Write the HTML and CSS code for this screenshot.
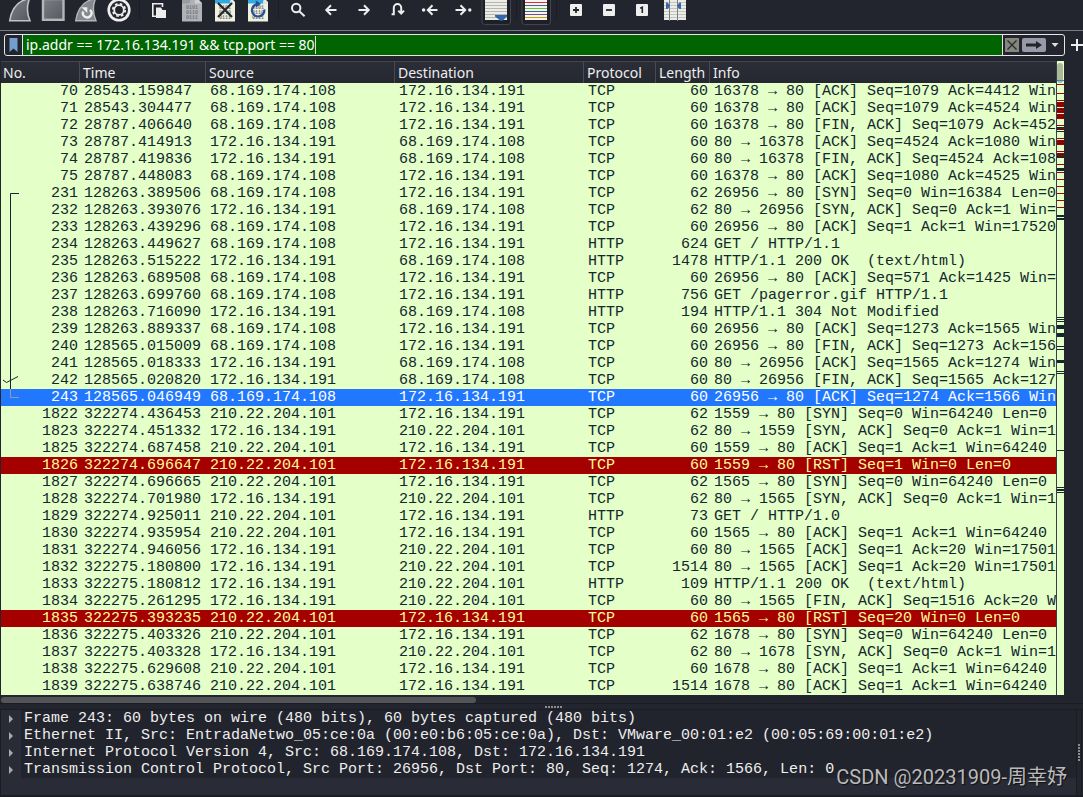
FILE: index.html
```html
<!DOCTYPE html>
<html lang="en">
<head>
<meta charset="utf-8">
<title>Packet capture</title>
<link rel="stylesheet" href="styles.css">
</head>
<body>
<div class="toolbar" role="toolbar" aria-label="Main toolbar">
  <button class="tool" aria-label="Start capture"><svg viewBox="-16 0 33 30"><defs><linearGradient id="metal" x1="0" y1="0" x2="1" y2="1"><stop offset="0" stop-color="#7c7f86"/><stop offset="1" stop-color="#555861"/></linearGradient></defs><path d="M-10.3 20.8C-8.5 9 -2 0.5 9.5 -1.5C7 5 6.5 13 10 20.8Z" fill="url(#metal)" stroke="#c2c3c5" stroke-width="1.6"/></svg></button>
  <button class="tool" aria-label="Stop capture"><svg viewBox="-16 0 33 30"><rect x="-10" y="-1" width="20.5" height="20.8" fill="url(#metal)" stroke="#b5b6b9" stroke-width="2.4"/></svg></button>
  <button class="tool" aria-label="Restart capture"><svg viewBox="-16 0 33 30"><path d="M-10.3 20.8C-8.5 9 -2 0.5 9.5 -1.5C7 5 6.5 13 10 20.8Z" fill="#85888e" stroke="#b5b6b8" stroke-width="1.4"/><path d="M-2.8 11.5A4.3 4.3 0 1 0 4 9.8" fill="none" stroke="#eee" stroke-width="2.4"/><path d="M-4.5 7.2h5.800v5.800z" fill="#eee"/></svg></button>
  <button class="tool" aria-label="Capture options"><svg viewBox="-16 0 33 30"><circle cx="0" cy="10" r="11.6" fill="#eee"/><circle cx="0" cy="10" r="9" fill="#24262c"/><circle cx="0" cy="10" r="6.2" fill="none" stroke="#eee" stroke-width="1.8" stroke-dasharray="2.600 2.270"/><circle cx="0" cy="10" r="4.800" fill="#24262c" stroke="#eee" stroke-width="1.800"/></svg></button>
  <span class="divider"></span>
  <button class="tool" aria-label="Open file"><svg viewBox="-16 0 33 30"><path d="M-2.5 16.3h-3.7V3.8H3.5V7" fill="none" stroke="#eee" stroke-width="1.6"/><path d="M-3 7.5h5l1.5 2.5h3.5v8h-10z" fill="#eee"/></svg></button>
  <button class="tool" aria-label="Save file"><svg viewBox="-16 0 33 30"><path d="M-10-2H5l5 5v18.5h-20z" fill="#b0b2b8"/><path d="M-10 0H-1L-3 3.500h-7z" fill="#999ba2"/><path d="M3-1v4.500h7L5-2z" fill="#cfd0d3"/><g class="bits"><text x="-6" y="9">0101</text><text x="-6" y="14">0110</text><text x="-6" y="19">0111</text></g></svg></button>
  <button class="tool" aria-label="Close file"><svg viewBox="-16 0 33 30"><path d="M-10-2H6l4 4v19.5h-20z" fill="#f1f1df"/><path d="M-10 0H6v3.500h-16z" fill="#31a9e2"/><path d="M5 0v3.500h5z" fill="#c8e5ef"/><g class="bits"><text x="-6" y="9">0101</text><text x="-6" y="14">0110</text><text x="-6" y="19">0111</text></g><path d="M-7 3L7 17M7 3L-7 17" stroke="#25272c" stroke-width="2.2"/></svg></button>
  <button class="tool" aria-label="Reload file"><svg viewBox="-16 0 33 30"><path d="M-10-2H6l4 4v19.5h-20z" fill="#f1f1df"/><path d="M-10 0H6v3.500h-16z" fill="#31a9e2"/><path d="M5 0v3.500h5z" fill="#c8e5ef"/><g class="bits"><text x="-6" y="9">0101</text><text x="-6" y="14">0110</text><text x="-6" y="19">0111</text></g><path d="M-1 4.2A6.2 6.2 0 1 0 6.300 9.500" fill="none" stroke="#264f96" stroke-width="2.2"/><path d="M-2.2 0.6v7.2L3 3.8z" fill="#264f96"/></svg></button>
  <span class="divider"></span>
  <button class="tool" aria-label="Find packet"><svg viewBox="-16 0 33 30"><circle cx="-1.8" cy="8" r="4.2" class="line"/><path d="M1.3 11.2L6.6 16.3" class="line"/></svg></button>
  <button class="tool" aria-label="Previous packet"><svg viewBox="-16 0 33 30"><path d="M5.5 10H-4.5M0 5.3L-4.7 10L0 14.7" class="line"/></svg></button>
  <button class="tool" aria-label="Next packet"><svg viewBox="-16 0 33 30"><path d="M-5.5 10H4.5M0 5.3L4.7 10L0 14.7" class="line"/></svg></button>
  <button class="tool" aria-label="Go to packet"><svg viewBox="-16 0 33 30"><path d="M-5.4 14.2h2.2V7.8a3.7 3.7 0 0 1 7.4 0V13M1.3 10.6L4.2 13.6L7 10.6" class="line"/></svg></button>
  <button class="tool" aria-label="First packet"><svg viewBox="-16 0 33 30"><circle cx="-6.4" cy="10" r="1.7" fill="#eee"/><path d="M7.5 10H-1.5M2.5 5.3L-2.2 10L2.5 14.7" class="line"/></svg></button>
  <button class="tool" aria-label="Last packet"><svg viewBox="-16 0 33 30"><circle cx="6.8" cy="10" r="1.7" fill="#eee"/><path d="M-7.5 10H1.5M-2.5 5.3L2.2 10L-2.5 14.7" class="line"/></svg></button>
  <button class="tool" aria-label="Auto scroll" aria-pressed="true"><svg viewBox="-16 0 33 30"><rect x="-14" y="-6" width="28.5" height="30.5" rx="2.5" class="pressed"/><path d="M-11 0h22v20h-22z" fill="#edede8"/><path d="M-11 2.5h22M-11 5.5h22M-11 8.5h22M-11 11.5h22M-11 14.5h22M-11 17.5h22" stroke="#b5b6b2"/><path d="M-1 15H11V16.5L6.5 20.8H4.5L-1 16.5z" fill="#3267ad"/></svg></button>
  <span class="divider"></span>
  <button class="tool" aria-label="Colorize" aria-pressed="true"><svg viewBox="-16 0 33 30"><rect x="-14" y="-6" width="28.5" height="30.5" rx="2.5" class="pressed"/><path d="M-11 0h22v20h-22z" fill="#f4f4f0"/><path d="M-11 2.5h22" stroke="#ef2929"/><path d="M-11 5.5h22M-11 11.5h22" stroke="#3465a4"/><path d="M-11 8.5h22" stroke="#73c216"/><path d="M-11 14.5h22" stroke="#75507b"/><path d="M-11 17.5h22" stroke="#c4a000"/></svg></button>
  <span class="divider"></span>
  <button class="tool" aria-label="Zoom in"><svg viewBox="-16 0 33 30"><rect x="-6" y="4" width="12" height="12" rx="1" fill="#eee"/><path d="M-3 10h6M0 7v6" stroke="#24262c" stroke-width="1.8"/></svg></button>
  <button class="tool" aria-label="Zoom out"><svg viewBox="-16 0 33 30"><rect x="-6" y="4" width="12" height="12" rx="1" fill="#eee"/><path d="M-3 10h6" stroke="#24262c" stroke-width="1.8"/></svg></button>
  <button class="tool" aria-label="Normal size"><svg viewBox="-16 0 33 30"><rect x="-6" y="4" width="12" height="12" rx="1" fill="#eee"/><path d="M-1.8 8.2L0.3 7.3V13" stroke="#24262c" stroke-width="1.6" fill="none"/></svg></button>
  <button class="tool" aria-label="Resize columns"><svg viewBox="-16 0 33 30"><path d="M-11 0h22v20h-22z" fill="#edede8"/><path d="M-11 2.5h22M-11 5.5h22M-11 8.5h22M-11 11.5h22M-11 14.5h22M-11 17.5h22" stroke="#c3c4c0"/><path d="M-5.5 0v21M2.5 0v21" stroke="#7d7f7c"/><path d="M-9 2.5h1.5L-5.5 5v2L-7.5 9H-9zM6 2.5H4.5L2.5 5v2L4.5 9H6z" fill="#3267ad"/></svg></button>
</div>

<div class="filterbar">
  <div class="filter">
    <button class="bookmark" aria-label="Filter bookmarks"><svg viewBox="0 0 9 14"><path d="M0.5 0h8v14l-4-3.5l-4 3.5z" fill="#729fcf"/></svg></button>
    <label class="expression"><input class="query" type="text" aria-label="Display filter" value="ip.addr == 172.16.134.191 &amp;&amp; tcp.port == 80" spellcheck="false"><span class="cursor"></span></label>
    <button class="clear" aria-label="Clear filter"><svg viewBox="0 0 14 14"><path d="M2.5 2.5l9 9M11.5 2.5l-9 9" stroke="#2a2c30" stroke-width="1.4"/></svg></button>
    <button class="apply" aria-label="Apply filter"><svg viewBox="0 0 24 14"><path d="M4 5.5h10V3l6 4l-6 4V8.5H4z" fill="#22242a"/></svg></button>
    <button class="history" aria-label="Recent filters"><svg viewBox="0 0 8 4"><path d="M0.5 0h7L4 4z" fill="#ddd"/></svg></button>
  </div>
  <button class="add" aria-label="Add filter button"><svg viewBox="0 0 12 12"><path d="M6 0v12M0 6h12" stroke="#eee" stroke-width="2"/></svg></button>
</div>

<main class="packets">
  <div class="list">
    <table class="grid">
      <colgroup><col class="c-no"><col class="c-time"><col class="c-addr"><col class="c-addr"><col class="c-proto"><col class="c-len"><col></colgroup>
      <thead><tr><th>No.</th><th>Time</th><th>Source</th><th>Destination</th><th>Protocol</th><th>Length</th><th>Info</th></tr></thead>
      <tbody>
        <tr><td>70</td><td>28543.159847</td><td>68.169.174.108</td><td>172.16.134.191</td><td>TCP</td><td>60</td><td>16378 → 80 [ACK] Seq=1079 Ack=4412 Win</td></tr>
        <tr><td>71</td><td>28543.304477</td><td>68.169.174.108</td><td>172.16.134.191</td><td>TCP</td><td>60</td><td>16378 → 80 [ACK] Seq=1079 Ack=4524 Win</td></tr>
        <tr><td>72</td><td>28787.406640</td><td>68.169.174.108</td><td>172.16.134.191</td><td>TCP</td><td>60</td><td>16378 → 80 [FIN, ACK] Seq=1079 Ack=452</td></tr>
        <tr><td>73</td><td>28787.414913</td><td>172.16.134.191</td><td>68.169.174.108</td><td>TCP</td><td>60</td><td>80 → 16378 [ACK] Seq=4524 Ack=1080 Win</td></tr>
        <tr><td>74</td><td>28787.419836</td><td>172.16.134.191</td><td>68.169.174.108</td><td>TCP</td><td>60</td><td>80 → 16378 [FIN, ACK] Seq=4524 Ack=108</td></tr>
        <tr><td>75</td><td>28787.448083</td><td>68.169.174.108</td><td>172.16.134.191</td><td>TCP</td><td>60</td><td>16378 → 80 [ACK] Seq=1080 Ack=4525 Win</td></tr>
        <tr><td>231</td><td>128263.389506</td><td>68.169.174.108</td><td>172.16.134.191</td><td>TCP</td><td>62</td><td>26956 → 80 [SYN] Seq=0 Win=16384 Len=0</td></tr>
        <tr><td>232</td><td>128263.393076</td><td>172.16.134.191</td><td>68.169.174.108</td><td>TCP</td><td>62</td><td>80 → 26956 [SYN, ACK] Seq=0 Ack=1 Win=</td></tr>
        <tr><td>233</td><td>128263.439296</td><td>68.169.174.108</td><td>172.16.134.191</td><td>TCP</td><td>60</td><td>26956 → 80 [ACK] Seq=1 Ack=1 Win=17520</td></tr>
        <tr><td>234</td><td>128263.449627</td><td>68.169.174.108</td><td>172.16.134.191</td><td>HTTP</td><td>624</td><td>GET / HTTP/1.1</td></tr>
        <tr><td>235</td><td>128263.515222</td><td>172.16.134.191</td><td>68.169.174.108</td><td>HTTP</td><td>1478</td><td>HTTP/1.1 200 OK  (text/html)</td></tr>
        <tr><td>236</td><td>128263.689508</td><td>68.169.174.108</td><td>172.16.134.191</td><td>TCP</td><td>60</td><td>26956 → 80 [ACK] Seq=571 Ack=1425 Win=</td></tr>
        <tr><td>237</td><td>128263.699760</td><td>68.169.174.108</td><td>172.16.134.191</td><td>HTTP</td><td>756</td><td>GET /pagerror.gif HTTP/1.1</td></tr>
        <tr><td>238</td><td>128263.716090</td><td>172.16.134.191</td><td>68.169.174.108</td><td>HTTP</td><td>194</td><td>HTTP/1.1 304 Not Modified</td></tr>
        <tr><td>239</td><td>128263.889337</td><td>68.169.174.108</td><td>172.16.134.191</td><td>TCP</td><td>60</td><td>26956 → 80 [ACK] Seq=1273 Ack=1565 Win</td></tr>
        <tr><td>240</td><td>128565.015009</td><td>68.169.174.108</td><td>172.16.134.191</td><td>TCP</td><td>60</td><td>26956 → 80 [FIN, ACK] Seq=1273 Ack=156</td></tr>
        <tr><td>241</td><td>128565.018333</td><td>172.16.134.191</td><td>68.169.174.108</td><td>TCP</td><td>60</td><td>80 → 26956 [ACK] Seq=1565 Ack=1274 Win</td></tr>
        <tr><td>242</td><td>128565.020820</td><td>172.16.134.191</td><td>68.169.174.108</td><td>TCP</td><td>60</td><td>80 → 26956 [FIN, ACK] Seq=1565 Ack=127</td></tr>
        <tr class="selected"><td>243</td><td>128565.046949</td><td>68.169.174.108</td><td>172.16.134.191</td><td>TCP</td><td>60</td><td>26956 → 80 [ACK] Seq=1274 Ack=1566 Win</td></tr>
        <tr><td>1822</td><td>322274.436453</td><td>210.22.204.101</td><td>172.16.134.191</td><td>TCP</td><td>62</td><td>1559 → 80 [SYN] Seq=0 Win=64240 Len=0</td></tr>
        <tr><td>1823</td><td>322274.451332</td><td>172.16.134.191</td><td>210.22.204.101</td><td>TCP</td><td>62</td><td>80 → 1559 [SYN, ACK] Seq=0 Ack=1 Win=1</td></tr>
        <tr><td>1825</td><td>322274.687458</td><td>210.22.204.101</td><td>172.16.134.191</td><td>TCP</td><td>60</td><td>1559 → 80 [ACK] Seq=1 Ack=1 Win=64240</td></tr>
        <tr class="reset"><td>1826</td><td>322274.696647</td><td>210.22.204.101</td><td>172.16.134.191</td><td>TCP</td><td>60</td><td>1559 → 80 [RST] Seq=1 Win=0 Len=0</td></tr>
        <tr><td>1827</td><td>322274.696665</td><td>210.22.204.101</td><td>172.16.134.191</td><td>TCP</td><td>62</td><td>1565 → 80 [SYN] Seq=0 Win=64240 Len=0</td></tr>
        <tr><td>1828</td><td>322274.701980</td><td>172.16.134.191</td><td>210.22.204.101</td><td>TCP</td><td>62</td><td>80 → 1565 [SYN, ACK] Seq=0 Ack=1 Win=1</td></tr>
        <tr><td>1829</td><td>322274.925011</td><td>210.22.204.101</td><td>172.16.134.191</td><td>HTTP</td><td>73</td><td>GET / HTTP/1.0</td></tr>
        <tr><td>1830</td><td>322274.935954</td><td>210.22.204.101</td><td>172.16.134.191</td><td>TCP</td><td>60</td><td>1565 → 80 [ACK] Seq=1 Ack=1 Win=64240</td></tr>
        <tr><td>1831</td><td>322274.946056</td><td>172.16.134.191</td><td>210.22.204.101</td><td>TCP</td><td>60</td><td>80 → 1565 [ACK] Seq=1 Ack=20 Win=17501</td></tr>
        <tr><td>1832</td><td>322275.180800</td><td>172.16.134.191</td><td>210.22.204.101</td><td>TCP</td><td>1514</td><td>80 → 1565 [ACK] Seq=1 Ack=20 Win=17501</td></tr>
        <tr><td>1833</td><td>322275.180812</td><td>172.16.134.191</td><td>210.22.204.101</td><td>HTTP</td><td>109</td><td>HTTP/1.1 200 OK  (text/html)</td></tr>
        <tr><td>1834</td><td>322275.261295</td><td>172.16.134.191</td><td>210.22.204.101</td><td>TCP</td><td>60</td><td>80 → 1565 [FIN, ACK] Seq=1516 Ack=20 W</td></tr>
        <tr class="reset"><td>1835</td><td>322275.393235</td><td>210.22.204.101</td><td>172.16.134.191</td><td>TCP</td><td>60</td><td>1565 → 80 [RST] Seq=20 Win=0 Len=0</td></tr>
        <tr><td>1836</td><td>322275.403326</td><td>210.22.204.101</td><td>172.16.134.191</td><td>TCP</td><td>62</td><td>1678 → 80 [SYN] Seq=0 Win=64240 Len=0</td></tr>
        <tr><td>1837</td><td>322275.403328</td><td>172.16.134.191</td><td>210.22.204.101</td><td>TCP</td><td>62</td><td>80 → 1678 [SYN, ACK] Seq=0 Ack=1 Win=1</td></tr>
        <tr><td>1838</td><td>322275.629608</td><td>210.22.204.101</td><td>172.16.134.191</td><td>TCP</td><td>60</td><td>1678 → 80 [ACK] Seq=1 Ack=1 Win=64240</td></tr>
        <tr><td>1839</td><td>322275.638746</td><td>210.22.204.101</td><td>172.16.134.191</td><td>TCP</td><td>1514</td><td>1678 → 80 [ACK] Seq=1 Ack=1 Win=64240</td></tr>
      </tbody>
    </table>
    <svg class="related" viewBox="0 0 20 210"><path d="M18 1.5H9.500V197" fill="none" stroke="#12272e"/><path d="M9.500 197v8.500H18" fill="none" stroke="#8f9bb0"/><path d="M2 188l3.500 2.500L17 184.500" fill="none" stroke="#12272e"/></svg>
  </div>
  <div class="minimap">
    <svg viewBox="0 0 7 634" preserveAspectRatio="none">
      <path d="M0 23.500h7M0 32.500h7M0 39.500h7M0 41.500h7M0 43.500h7M0 45.500h7M0 47.500h7M0 49.500h7M0 51.500h7M0 53.500h7M0 55.500h7M0 57.500h7M0 64.500h7M0 67.500h7M0 77.500h7M0 79.500h7M0 81.500h7M0 83.500h7M0 90.500h7M0 92.500h7M0 94.500h7M0 103.500h7M0 111.500h7M0 118.500h7M0 125.500h7M0 132.500h7M0 139.500h7M0 146.500h7" stroke="#a40000"/>
      <path d="M0 42.500h7M0 44.500h7M0 48.500h7M0 50.500h7M0 54.500h7M0 56.500h7M0 80.500h7M0 82.500h7M0 95.500h7" stroke="#6b0808"/>
      <path d="M0 66.500h7M0 68.500h7M0 70.500h7M0 93.500h7M0 96.500h7M0 256.500h7M0 258.500h7M0 260.500h7M0 285.500h7M0 288.500h7M0 310.500h7M0 312.500h7M0 389.500h7M0 426.500h7M0 431.500h7" stroke="#12272e"/>
      <path d="M0 107h7v3H0zM0 154h7v2H0zM0 157h7v2H0zM0 264h7v4H0zM0 272h7v4H0zM0 299h7v3H0zM0 428h7v2H0z" fill="#12272e"/>
      <rect x="0" y="2" width="6" height="20" rx="3" fill="#aab998"/><path d="M0 19.500h7" stroke="#3d7be0"/>
    </svg>
  </div>
</main>
<div class="hscroll"><div class="thumb"></div></div>
<div class="splitter"><span class="grip"></span></div>

<section class="lower">
  <div class="details">
    <div class="node"><button class="expand" aria-label="Expand frame"></button><span class="line-text">Frame 243: 60 bytes on wire (480 bits), 60 bytes captured (480 bits)</span></div>
    <div class="node"><button class="expand" aria-label="Expand Ethernet"></button><span class="line-text">Ethernet II, Src: EntradaNetwo_05:ce:0a (00:e0:b6:05:ce:0a), Dst: VMware_00:01:e2 (00:05:69:00:01:e2)</span></div>
    <div class="node"><button class="expand" aria-label="Expand IP"></button><span class="line-text">Internet Protocol Version 4, Src: 68.169.174.108, Dst: 172.16.134.191</span></div>
    <div class="node"><button class="expand" aria-label="Expand TCP"></button><span class="line-text">Transmission Control Protocol, Src Port: 26956, Dst Port: 80, Seq: 1274, Ack: 1566, Len: 0</span></div>
  </div>
  <div class="side"><span class="grip grip-vertical"></span></div>
  <div class="bytes"></div>
</section>
<div class="watermark">CSDN @20231909-周幸妤</div>
</body>
</html>
```
FILE: styles.css
```css
* { box-sizing: border-box; }
body {
  margin: 0;
  height: 100vh;
  overflow: hidden;
  display: flex;
  flex-direction: column;
  background: #23252e;
  color: #eee;
  font: 500 14px "Noto Sans", sans-serif;
}
button { margin: 0; padding: 0; border: 0; background: none; color: inherit; font: inherit; }
svg { display: block; }

.toolbar { display: flex; flex: none; height: 31px; padding-left: 4px; border-bottom: 1px solid #777a80; }
.tool, .tool svg { flex: none; width: 33px; height: 30px; }
.divider { flex: none; width: 7px; height: 20px; background: linear-gradient(#1c1e25, #1c1e25) center / 1px 100% no-repeat; }
.line { fill: none; stroke: #eee; stroke-width: 2; }
.pressed { fill: #1e2027; stroke: #42454d; }
.bits { fill: #75777c; font: bold 5px "Liberation Mono", monospace; }

.filterbar { display: flex; flex: none; align-items: center; height: 30px; padding: 0 0 2px 4px; gap: 6px; overflow: hidden; }
.filter { display: flex; flex: 1; align-items: center; height: 22px; border: 1px solid #e6e6e6; border-radius: 3px; min-width: 0; }
.bookmark { display: flex; align-items: center; justify-content: center; width: 18px; height: 20px; border-right: 1px solid #e6e6e6; }
.bookmark svg { width: 9px; height: 14px; }
.expression { display: flex; flex: 1; align-items: center; height: 20px; padding-left: 3px; background: #006400; border-right: 1px solid #e6e6e6; min-width: 0; }
.query { field-sizing: content; padding: 0; border: 0; outline: 0; background: none; color: #fff; font: 14px/20px "Noto Sans", sans-serif; }
.cursor { width: 1px; height: 18px; background: #ddd; }
.clear { width: 14px; height: 14px; margin-left: 2px; background: #85877c; }
.clear svg { width: 14px; height: 14px; }
.apply { width: 24px; height: 14px; margin-left: 3px; border-radius: 2px; background: #989aa8; }
.apply svg { width: 24px; height: 14px; }
.history { display: flex; align-items: center; justify-content: center; width: 18px; height: 20px; }
.history svg { width: 8px; height: 4px; }
.add { width: 12px; height: 12px; }
.add svg { width: 12px; height: 12px; }

.packets { display: flex; flex: 1; min-height: 0; padding: 0 19px 0 1px; }
.list { position: relative; flex: 1; min-width: 0; overflow: hidden; background: #e4ffc7; border-right: 1px solid #3c3e46; }
.grid { width: 100%; table-layout: fixed; border-collapse: separate; border-spacing: 0; }
.c-no { width: 78px; }
.c-time { width: 126px; }
.c-addr { width: 189px; }
.c-proto { width: 72px; }
.c-len { width: 54px; }
.grid th {
  height: 22px;
  padding: 0 0 0 3px;
  border-top: 1px solid #42454d;
  border-left: 1px solid #484b53;
  background: linear-gradient(#2b2e37, #262831);
  color: #eee;
  font-weight: 400;
  line-height: 20px;
  text-align: left;
  white-space: nowrap;
}
.grid th:first-child { border-left: 0; padding-left: 2px; }
.grid td {
  height: 17px;
  padding: 0 0 0 5px;
  overflow: hidden;
  color: #12272e;
  font: 15px/17px "Liberation Mono", monospace;
  white-space: pre;
}
.grid td:nth-child(1), .grid td:nth-child(6) { padding: 0 1px 0 0; text-align: right; }
.grid .selected td { background: #2277ff; color: #fff; }
.grid .reset td { background: #a40000; color: #fffc9c; }
.related { position: absolute; top: 131px; left: 0; width: 20px; height: 210px; }
.minimap { flex: none; width: 7px; background: #e4ffc7; }
.minimap svg { width: 7px; height: 100%; }

.hscroll { flex: none; height: 9px; padding: 2px 2px 0 1px; border-bottom: 1px solid #1b1d24; }
.thumb { width: 44%; height: 6px; border-radius: 3px; background: #535457; }
.splitter { display: flex; flex: none; justify-content: center; align-items: center; height: 6px; padding-left: 24px; border-bottom: 1px solid #1b1d24; }
.grip { width: 17px; height: 2px; background: repeating-linear-gradient(90deg, #8a8c90 0 2px, transparent 2px 3px); }
.lower { display: flex; flex: none; height: 87px; padding: 0 0 2px 1px; background: #1b1d24; }
.details { flex: 1; min-width: 0; overflow: hidden; background: #292b36; }
.node { display: flex; height: 17px; }
.expand { flex: none; width: 20px; background: linear-gradient(#aaa, #aaa) 8px 5px / 4px 8px no-repeat; clip-path: polygon(8px 5px, 12px 9px, 8px 13px); }
.line-text { flex: 1; padding-left: 3px; background: #22242d; font: 15px/17px "Liberation Mono", monospace; white-space: pre; }
.side { display: flex; justify-content: center; align-items: center; width: 5px; background: #23252e; border-left: 1px solid #1b1d24; }
.grip-vertical { width: 2px; height: 17px; background: repeating-linear-gradient(#8a8c90 0 2px, transparent 2px 3px); }
.bytes { width: 1px; margin-left: 1px; background: #23252e; }
.watermark {
  position: absolute;
  right: 16px;
  bottom: 8px;
  color: #b9babd;
  font: 20px/24px Roboto, "Noto Sans CJK SC", sans-serif;
  text-shadow: 1px 1px 1px #111;
}
```
